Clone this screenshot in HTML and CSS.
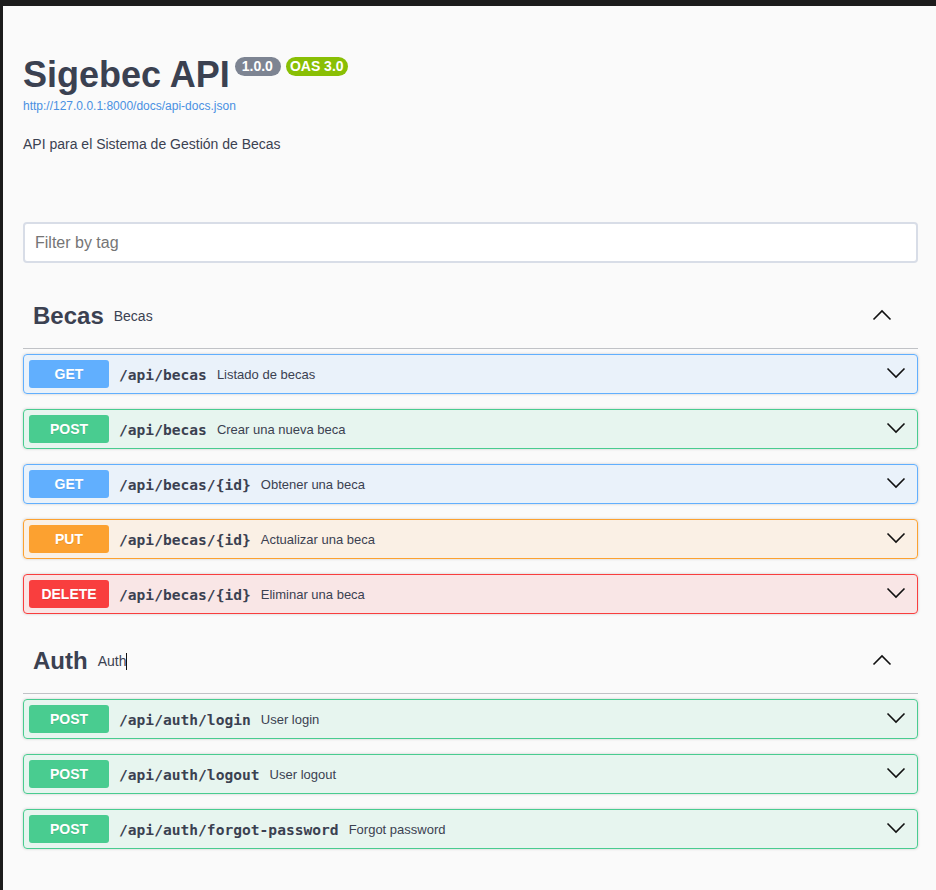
FILE: index.html
```html
<!DOCTYPE html>
<html lang="es">
<head>
<meta charset="utf-8">
<title>Sigebec API</title>
<link rel="stylesheet" href="styles.css">
</head>
<body>
<div class="frame">
  <div class="info">
    <h2 class="title"><span class="title-text">Sigebec API</span><span class="badge version">1.0.0</span><span class="badge oas">OAS 3.0</span></h2>
    <a class="url" href="#">http://127.0.0.1:8000/docs/api-docs.json</a>
    <p class="desc">API para el Sistema de Gestión de Becas</p>
  </div>

  <div class="filter"><input type="text" placeholder="Filter by tag"></div>

  <section class="tag-section">
    <div class="tag">
      <h3 class="tag-name">Becas</h3>
      <span class="tag-desc">Becas</span>
      <svg class="arrow-up" width="20" height="20" viewBox="0 0 20 20"><polyline points="1.5,13.5 10,5 18.5,13.5" fill="none" stroke="#111" stroke-width="1.6"/></svg>
    </div>
    <div class="op get"><span class="method">GET</span><span class="path">/api/becas</span><span class="op-desc">Listado de becas</span><svg class="arrow-down" width="20" height="20" viewBox="0 0 20 20"><polyline points="1.5,4.5 10,13 18.5,4.5" fill="none" stroke="#111" stroke-width="1.6"/></svg></div>
    <div class="op post"><span class="method">POST</span><span class="path">/api/becas</span><span class="op-desc">Crear una nueva beca</span><svg class="arrow-down" width="20" height="20" viewBox="0 0 20 20"><polyline points="1.5,4.5 10,13 18.5,4.5" fill="none" stroke="#111" stroke-width="1.6"/></svg></div>
    <div class="op get"><span class="method">GET</span><span class="path">/api/becas/{id}</span><span class="op-desc">Obtener una beca</span><svg class="arrow-down" width="20" height="20" viewBox="0 0 20 20"><polyline points="1.5,4.5 10,13 18.5,4.5" fill="none" stroke="#111" stroke-width="1.6"/></svg></div>
    <div class="op put"><span class="method">PUT</span><span class="path">/api/becas/{id}</span><span class="op-desc">Actualizar una beca</span><svg class="arrow-down" width="20" height="20" viewBox="0 0 20 20"><polyline points="1.5,4.5 10,13 18.5,4.5" fill="none" stroke="#111" stroke-width="1.6"/></svg></div>
    <div class="op delete"><span class="method">DELETE</span><span class="path">/api/becas/{id}</span><span class="op-desc">Eliminar una beca</span><svg class="arrow-down" width="20" height="20" viewBox="0 0 20 20"><polyline points="1.5,4.5 10,13 18.5,4.5" fill="none" stroke="#111" stroke-width="1.6"/></svg></div>
  </section>

  <section class="tag-section">
    <div class="tag">
      <h3 class="tag-name">Auth</h3>
      <span class="tag-desc">Auth<span class="caret"></span></span>
      <svg class="arrow-up" width="20" height="20" viewBox="0 0 20 20"><polyline points="1.5,13.5 10,5 18.5,13.5" fill="none" stroke="#111" stroke-width="1.6"/></svg>
    </div>
    <div class="op post"><span class="method">POST</span><span class="path">/api/auth/login</span><span class="op-desc">User login</span><svg class="arrow-down" width="20" height="20" viewBox="0 0 20 20"><polyline points="1.5,4.5 10,13 18.5,4.5" fill="none" stroke="#111" stroke-width="1.6"/></svg></div>
    <div class="op post"><span class="method">POST</span><span class="path">/api/auth/logout</span><span class="op-desc">User logout</span><svg class="arrow-down" width="20" height="20" viewBox="0 0 20 20"><polyline points="1.5,4.5 10,13 18.5,4.5" fill="none" stroke="#111" stroke-width="1.6"/></svg></div>
    <div class="op post"><span class="method">POST</span><span class="path">/api/auth/forgot-password</span><span class="op-desc">Forgot password</span><svg class="arrow-down" width="20" height="20" viewBox="0 0 20 20"><polyline points="1.5,4.5 10,13 18.5,4.5" fill="none" stroke="#111" stroke-width="1.6"/></svg></div>
  </section>
</div>
</body>
</html>
```
FILE: styles.css
```css
html, body {
  margin: 0;
  padding: 0;
  background: #1c1c1c;
  height: 100%;
  overflow: hidden;
}
.frame {
  margin: 6px 0 0 3px;
  background: #fafafa;
  height: 884px;
  padding: 0 18px 0 20px;
  font-family: "Liberation Sans", Arial, sans-serif;
  color: #3b4151;
}
.info {
  padding-top: 48px;
}
.title {
  margin: 0;
  font-size: 36px;
  font-weight: 700;
  line-height: 41px;
  display: flex;
  align-items: flex-start;
}
.badge {
  display: inline-block;
  margin-top: 3px;
  height: 19px;
  line-height: 19px;
  border-radius: 57px;
  color: #fff;
  font-size: 14px;
  font-weight: 700;
}
.version {
  background: #7d8492;
  padding: 0 8px 0 7px;
  margin-left: 5px;
}
.oas {
  background: #89bf04;
  padding: 0 4px;
  margin-left: 5px;
}
.url {
  display: block;
  margin-top: 4px;
  font-size: 12px;
  line-height: 14px;
  color: #4990e2;
  text-decoration: none;
}
.desc {
  margin: 23px 0 0;
  font-size: 14px;
  line-height: 16px;
}
.filter {
  margin-top: 70px;
}
.filter input {
  display: block;
  width: 100%;
  box-sizing: border-box;
  height: 41px;
  border: 2px solid #d8dde7;
  border-radius: 4px;
  background: #fff;
  padding: 0 10px;
  font-family: "Liberation Sans", Arial, sans-serif;
  font-size: 16px;
  color: #3b4151;
  outline: none;
}
.filter input::placeholder {
  color: #757575;
}
.tag-section {
  margin-top: 21px;
}
.tag-section + .tag-section {
  margin-top: 0;
}
.tag {
  display: flex;
  align-items: center;
  height: 64px;
  padding: 0 26px 0 10px;
  border-bottom: 1px solid rgba(59, 65, 81, 0.3);
  margin-bottom: 5px;
}
.tag-name {
  margin: 0;
  font-size: 24px;
  font-weight: 700;
}
.tag-desc {
  flex: 1;
  padding: 0 10px;
  font-size: 14px;
  display: flex;
  align-items: center;
}
.caret {
  display: inline-block;
  width: 1px;
  height: 17px;
  background: #111;
}
.op {
  display: flex;
  align-items: center;
  height: 40px;
  box-sizing: border-box;
  padding: 0 5px;
  margin-bottom: 15px;
  border: 1px solid;
  border-radius: 4px;
  box-shadow: 0 0 3px rgba(0, 0, 0, 0.19);
}
.method {
  width: 80px;
  height: 28px;
  line-height: 28px;
  flex: none;
  text-align: center;
  border-radius: 3px;
  color: #fff;
  font-size: 14px;
  font-weight: 700;
  text-shadow: 0 1px 0 rgba(0, 0, 0, 0.1);
}
.path {
  padding: 0 10px;
  font-family: "DejaVu Sans Mono", "Liberation Mono", monospace;
  font-weight: 700;
  font-size: 14.6px;
  color: #3b4151;
}
.op-desc {
  flex: 1;
  font-size: 13px;
  color: #3b4151;
}
.arrow-down {
  margin-right: 6px;
  flex: none;
}
.arrow-up {
  flex: none;
}
.get { background: rgba(97, 175, 254, 0.1); border-color: #61affe; }
.get .method { background: #61affe; }
.post { background: rgba(73, 204, 144, 0.1); border-color: #49cc90; }
.post .method { background: #49cc90; }
.put { background: rgba(252, 161, 48, 0.1); border-color: #fca130; }
.put .method { background: #fca130; }
.delete { background: rgba(249, 62, 62, 0.1); border-color: #f93e3e; }
.delete .method { background: #f93e3e; }
```
